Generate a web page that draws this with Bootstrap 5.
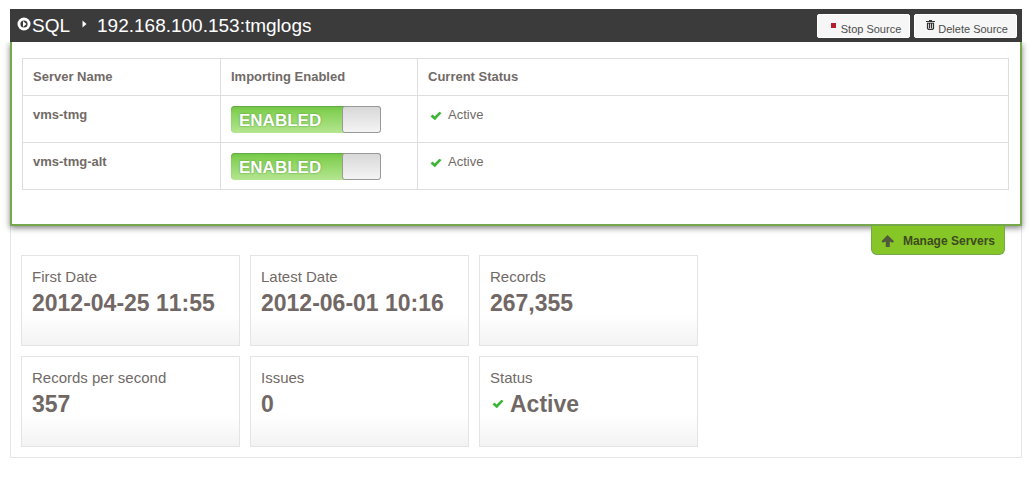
<!DOCTYPE html>
<html lang="en">
<head>
<meta charset="utf-8">
<meta name="viewport" content="width=device-width, initial-scale=1">
<title>SQL source: tmglogs</title>
<link href="https://cdn.jsdelivr.net/npm/bootstrap@5.3.0/dist/css/bootstrap.min.css" rel="stylesheet">
<style>
  body { font-family: "Liberation Sans", Arial, sans-serif; font-size: 13px; line-height: 18px; color: #716a67; background: #fff; font-kerning: none; }
  .source-page { padding: 9px 12px 9px 10px; }
  .source-bar { background: #3b3b3b; height: 33px; padding: 1px 5px 0 7px; }
  .source-title { font-size: 19px; line-height: 32px; }
  .source-title .arrow { margin: 0 10px 0 12px; }
  .btn-source { --bs-btn-font-size: 11px; --bs-btn-line-height: 20px; --bs-btn-border-radius: 2px;
    --bs-btn-bg: #f6f6f6; --bs-btn-color: #4c4c4c; --bs-btn-border-color: #fff; --bs-btn-hover-bg: #fff;
    height: 24px; padding: 6px 8px 0 7px; }
  .btn-source svg { margin-top: -8px; }
  .servers-panel { border: 2px solid #74a84a; border-top: 0; padding: 16px 11px 34px 10px; background: #fff; box-shadow: 0 2px 6px rgba(0,0,0,.5); clip-path: inset(0 -12px -12px -12px); }
  .servers-table { --bs-table-color: #716a67; --bs-table-bg: #fff; table-layout: fixed; border-color: #dedede; }
  .servers-table th, .servers-table td { padding: 9px 10px; vertical-align: top; }
  .servers-table tbody th, .servers-table tbody td { padding: 10px 10px 9px; }
  .servers-table .name-col { width: 198px; }
  .servers-table .toggle-col { width: 197px; }
  .toggle { width: 150px; height: 27px; border-radius: 4px; cursor: pointer;
    background: linear-gradient(#70c745, #84d055 20%, #b4e690); box-shadow: inset 0 1px 1px #64a846; }
  .toggle-text { font-size: 17px; font-weight: bold; line-height: 29px; color: #fff; padding-left: 8px; text-shadow: 0 0 2px #4d9331; }
  .toggle-knob { width: 39px; border: 1px solid #999; border-radius: 3px; background: linear-gradient(#d8d8d8, #f4f4f4); }
  .toggle input:focus-visible ~ .toggle-knob { outline: 2px solid #4d9331; }
  .check-mark { margin: 0 6px 0 2px; }
  .source-body { border: 1px solid #e6e6e6; border-top: 0; padding: 0 10px 10px; }
  .btn-manage { --bs-btn-font-size: 12px; --bs-btn-line-height: 18px; --bs-btn-bg: #86c626; --bs-btn-color: #3d4a22; --bs-btn-border-color: #74a84a; --bs-btn-hover-bg: #91d12f;
    border-top: 0; border-radius: 0 0 6px 6px; padding: 6px 9px 5px; height: 29px; margin-right: 6px; position: relative; }
  .stats { display: grid; grid-template-columns: repeat(auto-fill, 219px); gap: 10px; max-width: 680px; }
  .stat { border: 1px solid #e4e4e4; min-height: 91px; padding: 11px 10px; background: linear-gradient(#fff 65%, #f3f3f3); }
  .stat dt { font-size: 15px; line-height: 20px; font-weight: normal; }
  .stat dd { font-size: 23px; line-height: 32px; font-weight: bold; margin: 0; color: #716865; }
</style>
</head>
<body>
<svg class="d-none" aria-hidden="true">
  <symbol id="check" viewBox="0 0 12 10"><path d="M.5 5.500 2.500 3.600 4.600 5.500 9.400.8 11.600 2 4.900 9.200Z" fill="#3db536"/></symbol>
</svg>
<main class="source-page">
  <header class="source-bar d-flex align-items-center justify-content-between">
    <h1 class="source-title text-white fw-normal m-0 d-flex align-items-center">
      <svg width="15" height="14" viewBox="0 0 15 14" aria-hidden="true" class="mb-1"><circle cx="7" cy="7" r="6.500" fill="#fff"/><circle cx="7" cy="7" r="3.600" fill="#3b3b3b"/><path d="M6 4v6L9.500 7Z" fill="#fff"/></svg>
      <span>SQL</span>
      <svg class="arrow mb-1" width="5" height="8" viewBox="0 0 5 8" aria-hidden="true"><path d="M.5.5 4.500 4 .5 7.500Z" fill="#fff"/></svg>
      <span>192.168.100.153:tmglogs</span>
    </h1>
    <div class="d-flex gap-1">
      <button type="button" class="btn btn-source d-flex align-items-center"><svg width="16" height="9" viewBox="0 0 16 9" aria-hidden="true"><path d="M6 2h5v5H6Z" fill="#b3202a"/></svg>Stop Source</button>
      <button type="button" class="btn btn-source d-flex align-items-center"><svg width="16" height="11" viewBox="0 0 16 11" aria-hidden="true"><g fill="none" stroke="#333"><path d="M4 1.500h9M7 .5h3"/><path d="M5.500 3v5.500l1 1h4l1-1V3M7.500 3v5.500M9.500 3v5.500" stroke-width="1.200"/><path d="M5 3.200h7"/></g></svg>Delete Source</button>
    </div>
  </header>
  <section class="servers-panel">
    <table class="table table-bordered servers-table m-0">
      <thead>
        <tr><th scope="col" class="name-col">Server Name</th><th scope="col" class="toggle-col">Importing Enabled</th><th scope="col">Current Status</th></tr>
      </thead>
      <tbody>
        <tr>
          <th scope="row">vms-tmg</th>
          <td><label class="toggle d-flex justify-content-between position-relative"><input type="checkbox" class="visually-hidden" checked><span class="toggle-text">ENABLED</span><span class="toggle-knob"></span></label></td>
          <td><svg class="check-mark" width="12" height="10" aria-hidden="true"><use href="#check"/></svg>Active</td>
        </tr>
        <tr>
          <th scope="row">vms-tmg-alt</th>
          <td><label class="toggle d-flex justify-content-between position-relative"><input type="checkbox" class="visually-hidden" checked><span class="toggle-text">ENABLED</span><span class="toggle-knob"></span></label></td>
          <td><svg class="check-mark" width="12" height="10" aria-hidden="true"><use href="#check"/></svg>Active</td>
        </tr>
      </tbody>
    </table>
  </section>
  <section class="source-body">
    <div class="d-flex justify-content-end">
      <button type="button" class="btn btn-manage fw-bold d-flex align-items-center"><svg class="me-2" width="14" height="12" viewBox="0 0 14 12" aria-hidden="true"><path d="M6.500 0 13 6.200 11.500 7.800 8.800 6.500V12H4.800V6.500L2 7.800.5 6.200Z" fill="#50593b"/></svg>Manage Servers</button>
    </div>
    <dl class="stats m-0">
      <div class="stat"><dt>First Date</dt><dd>2012-04-25 11:55</dd></div>
      <div class="stat"><dt>Latest Date</dt><dd>2012-06-01 10:16</dd></div>
      <div class="stat"><dt>Records</dt><dd>267,355</dd></div>
      <div class="stat"><dt>Records per second</dt><dd>357</dd></div>
      <div class="stat"><dt>Issues</dt><dd>0</dd></div>
      <div class="stat"><dt>Status</dt><dd class="d-flex align-items-center"><svg class="check-mark" width="12" height="10" aria-hidden="true"><use href="#check"/></svg>Active</dd></div>
    </dl>
  </section>
</main>
<script src="https://cdn.jsdelivr.net/npm/bootstrap@5.3.0/dist/js/bootstrap.bundle.min.js"></script>
</body>
</html>
